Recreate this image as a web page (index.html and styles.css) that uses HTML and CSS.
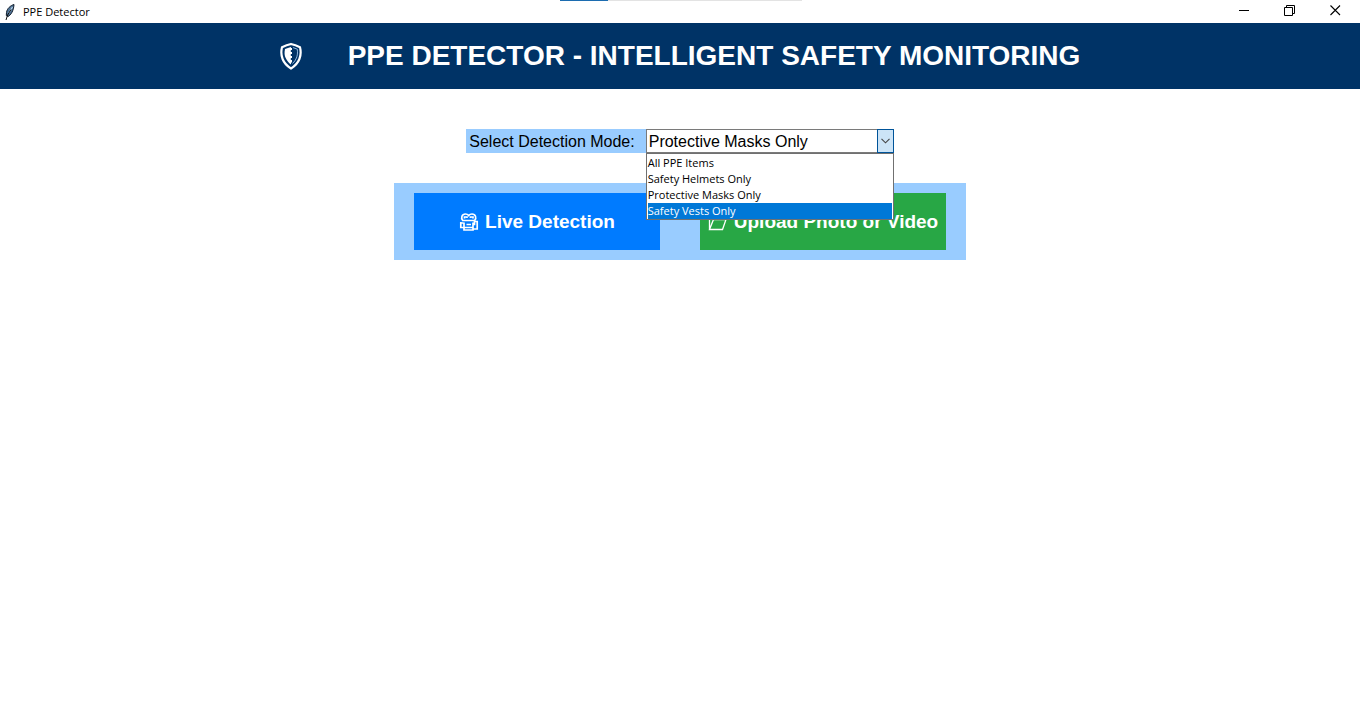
FILE: index.html
```html
<!DOCTYPE html>
<html lang="en">
<head>
<meta charset="utf-8">
<title>PPE Detector</title>
<link rel="stylesheet" href="styles.css">
</head>
<body>
<div class="titlebar">
  <svg class="feather" width="10" height="16" viewBox="0 0 10 16" aria-hidden="true">
    <path d="M9 0.5C5.500 1.500 2 4.500 1.500 8.500L1.300 11.500 3 12.500C6 11 8.500 7 9 0.500Z" fill="#4f7396" stroke="#101c2c" stroke-width="1"/>
    <path d="M7.500 3L3.500 9.500" stroke="#b9d3ea" stroke-width="1.200"/>
    <path d="M6 5.500L2.600 11 1 16" fill="none" stroke="#101010" stroke-width="1"/>
  </svg>
  <span class="window-name">PPE Detector</span>
  <div class="window-buttons">
    <button class="window-button" aria-label="Minimize"><svg width="11" height="11" viewBox="0 0 11 11"><path d="M0 5.500H10" stroke="#000"/></svg></button>
    <button class="window-button" aria-label="Restore"><svg width="11" height="11" viewBox="0 0 11 11"><path d="M0.500 2.500H8.500V10.500H0.500ZM2.500 2.500V0.500H10.500V8.500H8.500" fill="none" stroke="#000"/></svg></button>
    <button class="window-button window-close" aria-label="Close"><svg width="11" height="11" viewBox="0 0 11 11"><path d="M0.500 0.500L10 10M10 0.500L0.500 10" stroke="#000" stroke-width="1.100"/></svg></button>
  </div>
  <div class="top-progress"><div class="top-progress-fill"></div></div>
</div>
<header class="banner">
  <svg width="22" height="28" viewBox="0 0 22 28" aria-hidden="true">
    <path d="M11 2C14 2.700 17 3.800 20 5.200C21.200 10 20.800 13.500 19.400 17C18 20.600 15 24 11 26.500C7 24 4 20.600 2.600 17C1.200 13.500 0.800 10 2 5.200C5 3.800 8 2.700 11 2Z" fill="#003366" stroke="#fff" stroke-width="2.200"/>
    <path d="M11 5C8.800 5.600 7 6.300 5 7C4.200 11 4.500 13.600 5.700 16C6.800 18.600 8.600 20.800 11 22.500V20.500H12V18H10.800V16H12V14H10.800V12H12V10H10.800V8H12V6H11Z" fill="#fff"/>
    <path d="M13 5.600L17.300 7.200C17.800 11 17.400 13.600 16.400 16C15.600 18 14.300 20 12.500 21.500" fill="none" stroke="#8db4dc" stroke-width="1"/>
  </svg>
  <h1 class="banner-title">PPE DETECTOR - INTELLIGENT SAFETY MONITORING</h1>
</header>
<main class="content">
  <div class="mode-row">
    <label class="mode-label" for="mode">Select Detection Mode:</label>
    <div class="combo">
      <select class="combo-field" id="mode">
        <option>All PPE Items</option>
        <option>Safety Helmets Only</option>
        <option selected>Protective Masks Only</option>
        <option>Safety Vests Only</option>
      </select>
      <span class="combo-arrow"><svg width="9" height="6" viewBox="0 0 9 6"><path d="M0.500 0.800L4.500 4.800 8.500 0.800" fill="none" stroke="#444" stroke-width="1.100"/></svg></span>
      <ul class="combo-list" role="listbox" aria-label="Detection mode">
        <li class="combo-option" role="option">All PPE Items</li>
        <li class="combo-option" role="option">Safety Helmets Only</li>
        <li class="combo-option" role="option">Protective Masks Only</li>
        <li class="combo-option combo-option-active" role="option" aria-selected="true">Safety Vests Only</li>
      </ul>
    </div>
  </div>
  <div class="actions">
    <button class="action action-live">
      <svg width="20" height="20" viewBox="0 0 20 20" fill="none" stroke="#fff" stroke-width="1.700" aria-hidden="true">
        <path d="M3.800 8.500C1.500 6 3 2 6.400 2C8 2 9 2.700 9.700 3.600C10.400 2.700 11.500 2 13 2C16.500 2 17.900 6 15.600 8.500M3 8.500H16.500M1 11H4.500M1.800 10V15.500H5M5 10.500V18H14V10.500M14 12.500H15.500V9.500H18.200V17H14M7.500 12.500H12M5 15.500H14"/>
        <path d="M5.500 6.500V5H8V6M11.500 6V5H14V6.500"/>
      </svg>
      <span>Live Detection</span>
    </button>
    <button class="action action-upload">
      <svg width="20" height="20" viewBox="0 0 20 20" fill="none" stroke="#fff" stroke-width="1.300" aria-hidden="true">
        <path d="M1.500 17.500V4H6L7.500 6H13.500V7.500M1.500 17.500L5.500 7.500H18L14.500 17.500Z"/>
      </svg>
      <span>Upload Photo or Video</span>
    </button>
  </div>
</main>
</body>
</html>
```
FILE: styles.css
```css
* {
  box-sizing: border-box;
}

body {
  margin: 0;
  background: #fff;
  color: #000;
  font-family: "Liberation Sans", Arial, sans-serif;
}

button {
  border: 0;
  padding: 0;
  font: inherit;
}

.titlebar {
  position: relative;
  display: flex;
  align-items: center;
  height: 23px;
  padding-left: 5px;
  gap: 8px;
}

.window-name {
  font: 11px/16px "Open Sans", sans-serif;
}

.window-buttons {
  display: flex;
  margin-left: auto;
}

.window-button {
  display: flex;
  align-items: center;
  justify-content: center;
  width: 45px;
  height: 20px;
  margin-bottom: 3px;
  background: transparent;
}

.window-close {
  width: 48px;
  padding-right: 2px;
}

.top-progress {
  position: absolute;
  top: 0;
  left: 50%;
  width: 242px;
  height: 1px;
  margin-left: -120px;
  background: #e3e3e3;
}

.top-progress-fill {
  width: 20%;
  height: 1px;
  background: #1c6cb0;
}

.banner {
  display: flex;
  align-items: center;
  justify-content: center;
  gap: 46px;
  padding: 16px;
  background: #003366;
  color: #fff;
}

.banner-title {
  margin: 0;
  font-size: 28px;
  line-height: 34px;
  font-weight: bold;
}

.content {
  display: flex;
  flex-direction: column;
  align-items: center;
  gap: 30px;
  padding: 40px 16px;
}

.mode-row {
  display: flex;
  height: 24px;
}

.mode-label {
  padding: 1px 11px 0 3px;
  background: #99ccff;
  font-size: 16px;
  line-height: 23px;
}

.combo {
  position: relative;
  display: grid;
  grid-template-columns: 1fr 17px;
  width: 248px;
}

.combo-field {
  grid-area: 1 / 1 / 2 / 3;
  appearance: none;
  height: 24px;
  margin: 0;
  padding: 1px 2px 0;
  border: 1px solid #7a7a7a;
  border-radius: 0;
  background: #fff;
  color: #000;
  font: 16px/21px "Liberation Sans", Arial, sans-serif;
}

.combo-arrow {
  z-index: 1;
  grid-area: 1 / 2 / 2 / 3;
  display: flex;
  align-items: center;
  justify-content: center;
  border: 1px solid #005499;
  background: #cce4f7;
  pointer-events: none;
}

.combo-list {
  position: absolute;
  z-index: 2;
  top: 100%;
  left: 0;
  width: 100%;
  margin: 0;
  padding: 1px 1px 0;
  border: 1px solid #707070;
  background: #fff;
  list-style: none;
  font: 11px/16px "Open Sans", sans-serif;
}

.combo-option-active {
  background: #0078d7;
  color: #fff;
}

.actions {
  display: flex;
  gap: 40px;
  padding: 10px 20px;
  background: #99ccff;
}

.action {
  display: flex;
  align-items: center;
  justify-content: center;
  gap: 6px;
  width: 246px;
  height: 57px;
  color: #fff;
  font-size: 19px;
  font-weight: bold;
  white-space: nowrap;
}

.action-live {
  background: #007bff;
}

.action-upload {
  background: #28a745;
}
```
